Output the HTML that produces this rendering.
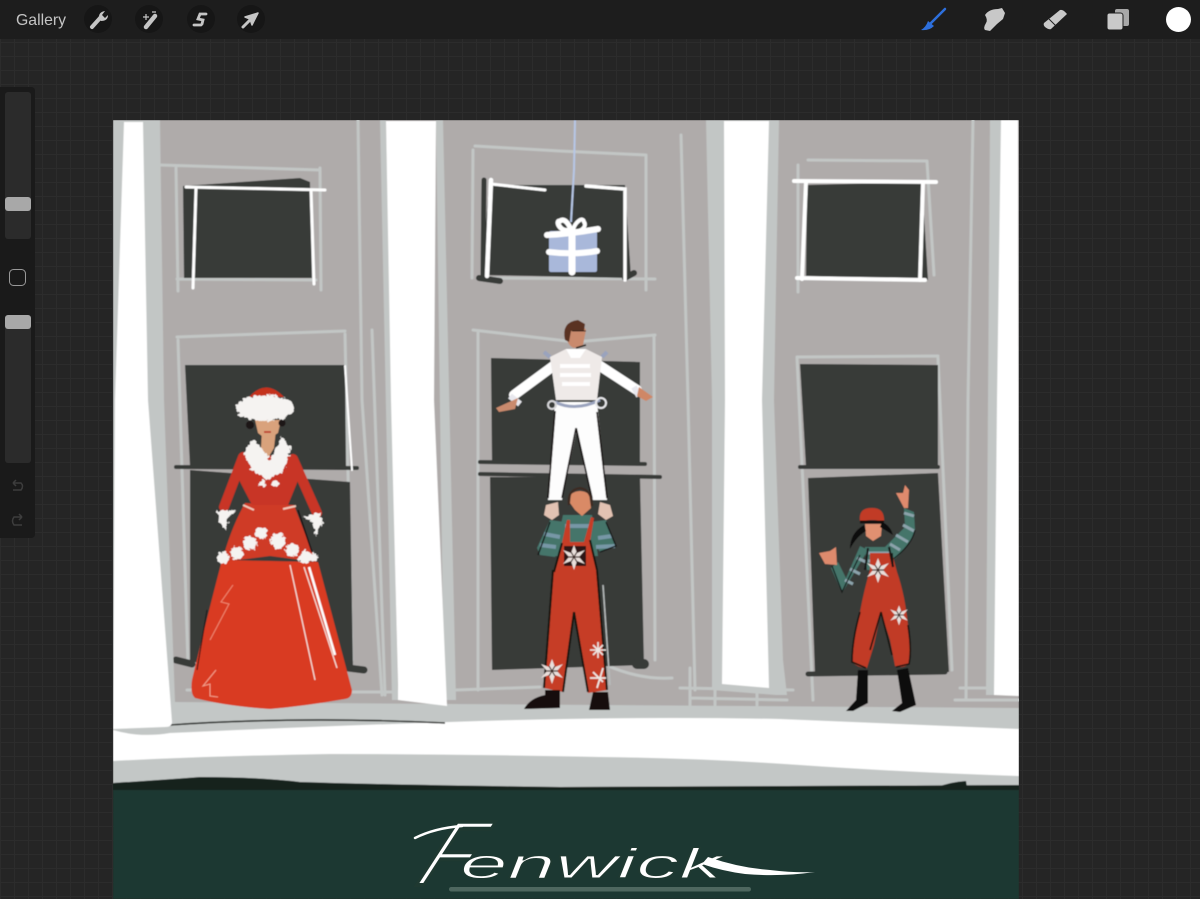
<!DOCTYPE html>
<html lang="en"><head><meta charset="utf-8"><title>Procreate sketch</title>
<style>
html,body{margin:0;padding:0;width:1200px;height:899px;overflow:hidden;background:#252525}
svg{display:block}
</style></head><body>
<svg width="1200" height="899" viewBox="0 0 1200 899" xmlns="http://www.w3.org/2000/svg">
<defs>
<pattern id="g" width="14" height="14" patternUnits="userSpaceOnUse">
<rect width="14" height="14" fill="#252525"/><path d="M0 .5H14M.5 0V14" stroke="#2c2c2c" stroke-width="1"/>
</pattern>
<filter id="soft" x="0" y="0" width="100%" height="100%"><feGaussianBlur stdDeviation=".4"/></filter>
<filter id="fur" x="-20%" y="-20%" width="140%" height="140%">
<feTurbulence type="fractalNoise" baseFrequency=".28" numOctaves="2" seed="4"/>
<feDisplacementMap in="SourceGraphic" scale="6" xChannelSelector="R" yChannelSelector="G"/>
</filter>
<g id="star">
<path d="M0-12L3-4L11-7L5 0L11 7L3 4L0 13L-3 4L-11 7L-5 0L-11-7L-3-4Z" fill="#e9dfdb"/>
<path d="M-6 0H6M-3-5L3 5M3-5L-3 5" stroke="#3a2522" stroke-width="1.2" fill="none"/>
</g>
</defs>
<rect width="1200" height="899" fill="url(#g)"/>

<g filter="url(#soft)">
<rect x="113" y="120" width="906" height="590" fill="#afabaa"/>

<!-- frame lines -->
<g fill="none" stroke="#c2c6c5" stroke-width="3" stroke-linecap="round">
<path d="M160 165L320 170M176 168L178 291M320 168L321 290M177 279L316 280"/>
<path d="M358 120L362 400L382 695"/>
<path d="M475 146L560 151L646 155M473 150L472 278M646 155L646 290M478 278L655 279"/>
<path d="M681 135L688 400L695 690"/>
<path d="M808 160L927 161M798 165L798 292M927 161L934 275"/>
<path d="M973 120L968 400L966 700"/>
<path d="M177 337L345 331M178 340L188 665M345 334L352 660M372 330L385 695"/>
<path d="M473 330L575 342L655 335M478 333L478 690M654 336L655 660"/>
<path d="M797 357L938 356M797 357L813 700M938 358L952 670"/>
<path d="M456 690L540 687M606 665Q640 680 672 678M680 688L793 690M690 698L787 700M960 688L1000 688M955 700H1019M690 668V705M715 670V705M757 690V705M187 690H230M320 692H400"/>
</g>

<!-- windows -->
<g fill="#383a39">
<path d="M183 186L300 178L310 182L312 278L184 278Z"/>
<path d="M489 185L625 185L631 278L482 275Z"/>
<path d="M807 185L922 182L928 280L806 276Z"/>
<path d="M185 365L345 365L346 470L190 466Z"/>
<path d="M190 470L350 482L353 668L190 662Z"/>
<path d="M491 358L640 362L640 463L492 463ZM490 477L640 477L644 665L492 670Z"/>
<path d="M800 364L938 365L938 467L806 467ZM808 478L938 473L949 672L815 675Z"/>
</g>
<g fill="none" stroke="#383a39" stroke-linecap="round">
<path d="M176 467L357 468" stroke-width="4"/>
<path d="M480 462L645 464M480 474L660 477" stroke-width="4"/>
<path d="M800 467H938" stroke-width="4"/>
<path d="M176 660L192 664M348 668L364 670" stroke-width="7"/>
<path d="M808 674L945 672" stroke-width="5"/>
<path d="M637 664L644 664" stroke-width="10"/>
<path d="M479 278L500 281" stroke-width="6"/>
<path d="M625 278L634 273" stroke-width="6"/>
<path d="M484 180L483 275" stroke-width="5"/>
</g>

<!-- white window lines -->
<g fill="none" stroke="#fff" stroke-linecap="round">
<path d="M186 187L325 190" stroke-width="3"/>
<path d="M196 188L193 288M311 190L314 284" stroke-width="3"/>
<path d="M491 180L487 276" stroke-width="4.500"/>
<path d="M491 184L545 190" stroke-width="3"/>
<path d="M586 186L625 189L625 280" stroke-width="3.500"/>
<path d="M794 181L936 182" stroke-width="4"/>
<path d="M806 182L802 279M923 182L920 280" stroke-width="4"/>
<path d="M797 278L925 280" stroke-width="4"/>
<path d="M345 366L352 470" stroke-width="2"/>
</g>

<!-- floor -->
<path d="M113 702H175L600 705L1019 708V790H113Z" fill="#c3c7c6"/>
<path d="M113 730Q140 738 170 733Q300 727 450 722Q620 716 780 719Q900 724 1019 729V776Q900 772 800 765Q700 758 600 757Q450 754 330 754Q210 756 113 761Z" fill="#fff"/>
<path d="M170 725Q300 716 445 723" fill="none" stroke="#2b2d2c" stroke-width="1.600"/>
<rect x="113" y="788" width="906" height="111" fill="#1f3931"/>
<path d="M113 783Q160 780 200 777Q260 777 300 782Q400 785 560 787L1019 785V790H113Z" fill="#15211e"/>
<path d="M938 787Q950 782 966 781L967 787Z" fill="#15211e"/>

<!-- pillars -->
<path d="M113 120H160L164 400L175 702H113Z" fill="#c2c6c5"/>
<path d="M124 122L143 122L148 400L172 722Q172 727 165 727L113 729L115 400Z" fill="#fff"/>
<path d="M380 120H386L398 700H392Z" fill="#c2c6c5"/>
<path d="M436 120H443L456 700H444Z" fill="#c2c6c5"/>
<path d="M386 121L436 121L434 400L447 706L398 700L398 685L391 400Z" fill="#fff"/>
<path d="M706 120H779L774 400L783 660L787 695H776L712 690L712 400Z" fill="#c2c6c5"/>
<path d="M724 121L769 121L762 400L769 688L722 684L725 400Z" fill="#fff"/>
<path d="M990 120H1003L1000 400L996 695H986L988 400Z" fill="#c2c6c5"/>
<path d="M1001 120H1018L1019 696L994 695L997 400Z" fill="#fff"/>

<!-- gift -->
<path d="M575 120L574 170L571 222" fill="none" stroke="#b7c7e6" stroke-width="2"/>
<rect x="549" y="231" width="48" height="41" rx="2" fill="#a9b8da"/>
<g fill="none" stroke="#fff" stroke-linecap="round">
<path d="M547 235Q570 234 598 229" stroke-width="6"/>
<path d="M549 252Q575 255 597 251" stroke-width="6"/>
<path d="M572 232V272" stroke-width="7"/>
<path d="M570 230C560 233 555 220 560 221C565 217 570 226 571 231" stroke-width="5"/>
<path d="M573 230C575 222 583 216 584 222C587 226 582 232 574 231" stroke-width="4"/>
</g>

<!-- LADY -->
<path d="M222 560L318 562L352 690Q352 698 345 699Q305 706 270 709Q225 706 195 698Q190 694 192 680Q205 625 222 560Z" fill="#d93a24"/>
<path d="M245 503L294 505L316 562L270 556L222 562Q230 530 245 503Z" fill="#cf3a25"/>
<path d="M243 455L293 456L299 478L288 505H252L238 478Z" fill="#c83626"/>
<path d="M243 457L224 507M293 459L317 513" fill="none" stroke="#c83625" stroke-width="10" stroke-linecap="round"/>
<path d="M298 510L312 552" stroke="#1a1313" stroke-width="1.500" fill="none"/>
<path d="M262 430H276L274 448L268 458L261 448Z" fill="#d9a27c"/>
<path d="M255 420H281L278 433L267 440L258 433Z" fill="#d9a27c"/>
<path d="M264 432H271" stroke="#b82a1e" stroke-width="1.500"/>
<circle cx="250" cy="425" r="4" fill="#1c1414"/><circle cx="282" cy="423" r="3.500" fill="#1c1414"/>
<path d="M249 397Q266 378 284 397Z" fill="#c4301f"/>
<g fill="#f5f3f1" filter="url(#fur)">
<ellipse cx="265" cy="408" rx="29" ry="13"/>
<path d="M252 439L263 449L270 460L282 436L291 449L282 472L268 480L252 470L244 454Z"/>
<circle cx="268" cy="470" r="8"/><circle cx="256" cy="463" r="7"/><circle cx="281" cy="461" r="7"/><circle cx="263" cy="484" r="3.500"/><circle cx="275" cy="484" r="3.500"/>
<circle cx="223" cy="558" r="6"/><circle cx="237" cy="553" r="6.500"/><circle cx="250" cy="543" r="7"/><circle cx="261" cy="533" r="6"/><circle cx="278" cy="541" r="7.500"/><circle cx="292" cy="550" r="6.500"/><circle cx="305" cy="557" r="6.500"/><circle cx="313" cy="557" r="4.500"/>
<path d="M217 511L236 510L228 518L226 530L220 522Z"/><path d="M303 517L320 512L322 523L316 536L312 522Z"/>
</g>
<path d="M243 505L254 510M283 509L296 506" stroke="#f0c7b8" stroke-width="2"/>
<path d="M290 565L315 680M304 567L337 668" stroke="#f5dcd4" stroke-width="1.300" fill="none"/>
<path d="M309 567L335 655" stroke="#fff" stroke-width="2.500" fill="none"/>
<path d="M233 585L221 602L229 604L210 640" stroke="#ef8a72" stroke-width="1" fill="none"/>
<path d="M216 670L203 686L210 684L210 696L218 697" stroke="#f3a08a" stroke-width="1" fill="none"/>
<path d="M207 610L197 670" stroke="#1b1515" stroke-width="1" fill="none"/>

<!-- MAN top -->
<path d="M556 364L514 395" stroke="#fff" stroke-width="10" stroke-linecap="round"/>
<path d="M597 364L637 390" stroke="#fff" stroke-width="10" stroke-linecap="round"/>
<path d="M510 396L520 404M634 387L639 396" stroke="#e8e8ee" stroke-width="6"/>
<path d="M518 398L496 408L499 412L515 409Z" fill="#c98a6d"/>
<path d="M639 387L653 397L646 401L637 396Z" fill="#cf8766"/>
<path d="M550 357L566 349H586L602 357L597 400H556Z" fill="#efeae8"/>
<path d="M560 366H590M560 375H591M562 384H590" stroke="#fff" stroke-width="4"/>
<path d="M566 349H586L580 358H571Z" fill="#fff"/>
<path d="M550 357L544 352M602 357L607 352" stroke="#9aa3bd" stroke-width="4"/>
<path d="M555 402L597 402L607 500H593L577 428L562 500H548Z" fill="#fdfdfd"/>
<path d="M555 402Q575 412 600 400" stroke="#9aa3bd" stroke-width="3" fill="none"/>
<path d="M555 411L548 498M576 428L562 498M576 428L592 498M597 412L607 498" stroke="#141010" stroke-width="1.600" fill="none"/>
<path d="M566 332Q566 345 574 348L583 345L586 330L584 327H570Z" fill="#c98a6d"/>
<path d="M565 340Q561 322 578 320L585 324L584 331H571L569 342Z" fill="#5a3324"/>
<path d="M576 348L586 345" stroke="#1b1210" stroke-width="1.500"/>
<path d="M572 331H586" stroke="#241a16" stroke-width="1"/>
<circle cx="601" cy="403" r="5" fill="none" stroke="#e9e9ec" stroke-width="2"/>
<circle cx="552" cy="405" r="4" fill="none" stroke="#d8d8da" stroke-width="2"/>

<!-- MAN bottom -->
<path d="M565 522L550 520L537 548L540 555L555 557L565 540Z" fill="#44756b"/>
<path d="M590 522L606 520L616 546L600 552L592 540Z" fill="#44756b"/>
<path d="M563 515H592L598 556H554Z" fill="#44756b"/>
<path d="M540 545L556 547M544 534L560 537M598 538L612 536M596 547L615 546M565 526H592" stroke="#7797a6" stroke-width="4" fill="none"/>
<path d="M538 555L550 522M606 522L616 546L600 552" stroke="#131413" stroke-width="1.400" fill="none"/>
<path d="M571 494Q580 488 589 494L591 508L582 516L575 510L570 503Z" fill="#d98a66"/>
<path d="M569 505Q567 490 580 488Q592 490 592 506" stroke="#3c2a20" stroke-width="2" fill="none"/>
<path d="M546 505L558 502L559 515L552 520L544 515Z" fill="#e2c2b2"/>
<path d="M600 502L610 505L613 516L606 520L598 514Z" fill="#e2c2b2"/>
<path d="M562 543L567 520L570 520L570 542H584L591 517L594 518L590 542L597 572L607 690L588 693L575 612L563 692L544 688L553 572Z" fill="#c63c27"/>
<path d="M553 570L544 688M597 570L607 690M574 612L563 692M574 612L588 692M562 543L554 572M590 540L597 570" stroke="#161211" stroke-width="2" fill="none"/>
<path d="M603 585L610 685" stroke="#b8bcbc" stroke-width="1.500" fill="none"/>
<rect x="564" y="546" width="22" height="20" fill="#141110" opacity=".85"/>
<use href="#star" x="574" y="557"/><use href="#star" x="552" y="671"/>
<path d="M590 650H606M598 642V658M593 645L603 655M603 645L593 655" stroke="#efe6e2" stroke-width="1.600"/>
<path d="M593 672L603 682M603 668L597 688M590 678H606" stroke="#efe6e2" stroke-width="1.800"/>
<path d="M545 690H560V708L524 709Q530 698 545 695Z" fill="#120f0f"/>
<path d="M593 692H608L610 710H589Z" fill="#120f0f"/>

<!-- GIRL -->
<path d="M904 508L914 512L915 530Q910 548 891 562L882 550L905 527Z" fill="#44756b"/>
<path d="M868 550L842 593L831 568L838 562L846 578L860 546Z" fill="#44756b"/>
<path d="M904 513L914 516M903 525L914 531M896 535L908 542M890 544L900 550M857 558L866 562M850 569L860 574M845 580L853 584" stroke="#8ca3ab" stroke-width="3" fill="none"/>
<path d="M832 566L842 592L860 555M915 530Q912 545 892 560" stroke="#141413" stroke-width="1.200" fill="none"/>
<path d="M819 553L830 551L836 547L837 565L825 564Z" fill="#de8a6d"/>
<path d="M896 493L903 493L905 485L909 490L908 508H904Z" fill="#de8a6d"/>
<path d="M865 547H890L893 570H867Z" fill="#44756b"/>
<path d="M868 553H890M868 561H890" stroke="#8ca3ab" stroke-width="3"/>
<path d="M870 553L892 553L897 572Q905 595 908 625Q912 650 909 664Q902 669 895 666L890 640L881 612L874 645L867 668Q858 668 852 662Q852 640 860 612Q864 590 870 570Z" fill="#c13a26"/>
<path d="M860 612Q852 640 852 662L866 668M881 612L870 650M881 612L892 655M908 625Q912 650 909 664L896 667M892 553L893 567" stroke="#171211" stroke-width="1.600" fill="none"/>
<path d="M865 524H882L881 536L873 541L866 536Z" fill="#e09071"/>
<path d="M860 522Q858 508 871 508Q885 507 884 522Q872 518 860 522Z" fill="#c13a26"/>
<path d="M860 522H884" stroke="#141110" stroke-width="3"/>
<path d="M864 525Q850 533 850 549Q856 537 866 531ZM882 522Q890 525 893 535Q885 530 880 527Z" fill="#100d0d"/>
<path d="M868 548L865 570M889 547L893 567" stroke="#151212" stroke-width="2"/>
<use href="#star" x="878" y="570"/>
<use href="#star" transform="translate(899 615) scale(.8)"/>
<path d="M858 670H868V703L853 711L846 711L856 700Z" fill="#100d0d"/>
<path d="M897 670L908 668L916 705L900 712L892 711L902 703Z" fill="#100d0d"/>
</g>

<!-- Fenwick signature: real text plus flourish strokes -->
<g fill="#fff">
<text transform="translate(410 885) skewX(-33) scale(.85 1)" font-family="Liberation Sans, sans-serif" font-size="92" stroke="#1f3931" stroke-width="4" paint-order="fill stroke">F</text>
<path d="M415 838Q435 828 462 826" fill="none" stroke="#fff" stroke-width="2.500" stroke-linecap="round"/>
<text x="460" y="878" font-family="Liberation Sans, sans-serif" font-style="italic" font-size="42" textLength="262" lengthAdjust="spacingAndGlyphs" stroke="#1f3931" stroke-width="1" paint-order="fill stroke">enwick</text>
<path d="M708 857Q740 868 770 870Q795 873 815 872Q780 877 745 874Q722 871 702 864Z"/>
</g>

<!-- home indicator -->
<rect x="449" y="887" width="302" height="4.500" rx="2.200" fill="#4e675f"/>

<!-- top bar -->
<rect width="1200" height="39" fill="#1d1d1d"/>
<text x="16" y="25" font-family="Liberation Sans, sans-serif" font-size="15.800" fill="#c4c4c4">Gallery</text>
<g fill="#161616"><circle cx="98" cy="19" r="14"/><circle cx="149" cy="19" r="14"/><circle cx="201" cy="19" r="14"/><circle cx="251" cy="19" r="14"/></g>
<path d="M92 27L101 17" stroke="#c5c5c5" stroke-width="4" stroke-linecap="round"/>
<path d="M99 19Q98 12 105 11L102 15L105 18L108 15Q108 21 101 21Z" fill="#c5c5c5"/>
<path d="M146 27L155 16" stroke="#c5c5c5" stroke-width="4.500" stroke-linecap="round"/>
<path d="M143 17H149M146 14V20M152 12H156" stroke="#c5c5c5" stroke-width="1.200"/>
<path d="M206 14H200L198 19L203 20L202 24M194 25H201" fill="none" stroke="#c5c5c5" stroke-width="2.800" stroke-linecap="round"/>
<path d="M243 27L252 18" stroke="#c5c5c5" stroke-width="3" stroke-linecap="round"/>
<path d="M258 13L245 17L250 19L252 25Z" fill="#c5c5c5" stroke="#c5c5c5" stroke-width="1.500" stroke-linejoin="round"/>
<path d="M945 9L929 25" stroke="#2d6fdc" stroke-width="2.500" stroke-linecap="round"/>
<path d="M928 21L934 26Q929 31 921 30Q926 27 928 21Z" fill="#2d6fdc"/>
<path d="M985 15Q989 9 998 9L1002 8L1005 13L1003 19L997 24L990 31L985 30Q983 28 986 23Q988 20 985 15Z" fill="#c8c8c8"/>
<path d="M1044 23L1060 10Q1063 9 1067 14L1051 29Q1049 30 1045 27Q1043 25 1044 23Z" fill="#c8c8c8"/>
<path d="M1049 19L1056 26" stroke="#1d1d1d" stroke-width="1"/>
<rect x="1115" y="9" width="14" height="17" rx="2" fill="#a8a8a8"/>
<rect x="1107" y="13" width="16" height="17" rx="2.500" fill="#c9c9c9" stroke="#1d1d1d" stroke-width="1"/>
<circle cx="1178.500" cy="19.500" r="12.500" fill="#fff"/>

<!-- sidebar -->
<path d="M0 87H31Q35 87 35 91V534Q35 538 31 538H0Z" fill="#1a1a1a"/>
<rect x="5" y="92" width="26" height="147" rx="3" fill="#2b2b2b"/>
<rect x="5" y="197" width="26" height="14" rx="3" fill="#a8a8a8"/>
<rect x="5" y="315" width="26" height="148" rx="3" fill="#2b2b2b"/>
<rect x="5" y="315" width="26" height="14" rx="3" fill="#a8a8a8"/>
<rect x="9.500" y="269.500" width="16" height="16" rx="4" fill="none" stroke="#999" stroke-width="1"/>
<path d="M13 483H21Q24 486 21 490H13M13 483L16 480M13 483L16 486" fill="none" stroke="#3d3d3d" stroke-width="1.500"/>
<path d="M22 517H14Q11 521 14 525H22M22 517L19 514M22 517L19 520" fill="none" stroke="#3d3d3d" stroke-width="1.500"/>
</svg>
</body></html>
